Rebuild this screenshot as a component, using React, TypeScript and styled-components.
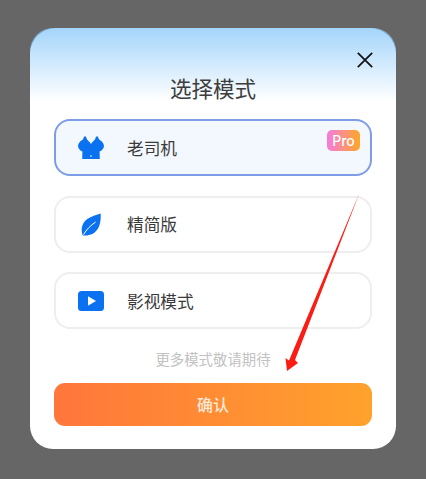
import React from 'react';
import styled, {createGlobalStyle} from "styled-components";

const GlobalStyle = createGlobalStyle`
    html, body {
        margin: 0;
        padding: 0;
        background: #666666;
    }
    body {
        font-family: "Noto Sans CJK SC", "Noto Sans", sans-serif;
    }
`

const BraIcon = () => (
    <svg width="26" height="23" viewBox="0 0 26 23">
        <path
            fill="#0a72f0"
            d="M7 0.3 C7.9 0.3 8.3 1.2 8.6 2.6 C9 4.4 11.6 5.4 13 8 C14.4 5.4 17 4.4 17.4 2.6 C17.7 1.2 18.1 0.3 19 0.3 C19.9 0.3 20.3 1.2 20.6 2.6 C20.9 4 23 4.5 24.6 6.4 C26 8 26.4 10.6 25.2 12.6 C24.2 14.2 23 15 21.6 15.6 L21.8 23 L4.2 23 L4.4 15.6 C3 15 1.8 14.2 0.8 12.6 C-0.4 10.6 0 8 1.4 6.4 C3 4.5 5.1 4 5.4 2.6 C5.7 1.2 6.1 0.3 7 0.3 Z"
        />
        <circle cx="13" cy="20" r="1" fill="#9cc8fb"/>
    </svg>
)

const LeafIcon = () => (
    <svg width="20" height="23" viewBox="0 0 20 23">
        <path
            fill="#0a72f0"
            d="M19.6 0.4 C20.2 8 18.6 15.4 13.6 19.4 C10.4 22 5.6 22.8 1.6 22.4 C0.2 18.2 0 12.8 3.6 8.4 C7 4.4 13.6 2.4 19.6 0.4 Z"
        />
        <path d="M2.6 21.6 C5.4 16.6 9.4 12.6 14.6 9" stroke="#ffffff" strokeWidth="1" fill="none"/>
    </svg>
)

const PlayIcon = () => (
    <svg width="26" height="20" viewBox="0 0 26 20">
        <rect x="0" y="0" width="26" height="20" rx="3.5" fill="#0a72f0"/>
        <path d="M10 5.2 L18 10 L10 14.8 Z" fill="#ffffff"/>
    </svg>
)

const CloseIcon = () => (
    <svg width="16" height="16" viewBox="0 0 16 16">
        <path d="M0.8 0.8 L15.2 15.2 M15.2 0.8 L0.8 15.2" stroke="#111111" strokeWidth="1.7" fill="none"/>
    </svg>
)

const modes = [
    {title: "老司机", icon: <BraIcon/>, active: true},
    {title: "精简版", icon: <LeafIcon/>, active: false},
    {title: "影视模式", icon: <PlayIcon/>, active: false},
]

export default function App() {
    return (
        <Page>
            <GlobalStyle/>
            <Dialog>
                <CloseButton><CloseIcon/></CloseButton>
                <Title>选择模式</Title>
                <ModeList>
                    {modes.map(mode => (
                        <ModeRow key={mode.title} $active={mode.active}>
                            <IconSlot>{mode.icon}</IconSlot>
                            <ModeName>{mode.title}</ModeName>
                            {mode.active && <ProBadge>Pro</ProBadge>}
                        </ModeRow>
                    ))}
                </ModeList>
                <Hint>更多模式敬请期待</Hint>
                <ConfirmButton>确认</ConfirmButton>
            </Dialog>
            <Arrow width="426" height="479" viewBox="0 0 426 479">
                <path
                    fill="#fb1c14"
                    d="M359.5 193 L295 360 L298 363 L287 371 L285.5 358 L289 360.5 Z"
                />
            </Arrow>
        </Page>
    )
}

const Page = styled.div`
    position: relative;
    width: 426px;
    height: 479px;
    padding-top: 28px;
    box-sizing: border-box;
    overflow: hidden;
    background: #666666;
`
const Dialog = styled.div`
    position: relative;
    isolation: isolate;
    width: 366px;
    height: 421px;
    margin-left: 30px;
    padding: 0 24px;
    box-sizing: border-box;
    display: flex;
    flex-direction: column;
    border-radius: 23px;
    background: linear-gradient(180deg, #7da7c6 0, #7da7c6 30px, #ffffff 30px);

    &::before {
        content: '';
        position: absolute;
        z-index: -1;
        top: 0;
        left: 0;
        right: 0;
        height: 73px;
        border-radius: 26px 26px 0 0;
        background: linear-gradient(180deg, #a4d5fb 0, #ffffff 100%);
    }
`
const CloseButton = styled.div`
    position: absolute;
    top: 24px;
    right: 23px;
    width: 16px;
    height: 16px;
    line-height: 0;
`
const Title = styled.h1`
    margin: 45px 0 0;
    height: 30px;
    font-size: 21.5px;
    line-height: 30px;
    font-weight: 400;
    text-align: center;
    color: #3d3d3d;
`
const ModeList = styled.div`
    display: flex;
    flex-direction: column;
    gap: 19.5px;
    margin-top: 16px;
`
const ModeRow = styled.div<{$active: boolean}>`
    position: relative;
    height: 57px;
    box-sizing: border-box;
    display: flex;
    align-items: center;
    padding-left: 21px;
    border-radius: 16px;
    border: 2px solid ${props => props.$active ? "#7e9de8" : "#eeeeee"};
    background: ${props => props.$active ? "#f3f8fe" : "#ffffff"};
`
const IconSlot = styled.div`
    width: 28px;
    height: 28px;
    display: flex;
    align-items: center;
    justify-content: center;
    line-height: 0;
`
const ModeName = styled.span`
    margin-left: 22px;
    font-size: 16.7px;
    line-height: 24px;
    color: #3a3a3a;
`
const ProBadge = styled.span`
    position: absolute;
    top: 9px;
    right: 10px;
    width: 33px;
    height: 21px;
    border-radius: 5px;
    background: linear-gradient(90deg, #f47be0 0, #ffa726 100%);
    font-family: "Inter", "Noto Sans", sans-serif;
    font-size: 14px;
    font-weight: 500;
    line-height: 21px;
    text-align: center;
    color: #ffffff;
`
const Hint = styled.div`
    margin-top: 19px;
    height: 22px;
    font-size: 14.4px;
    line-height: 22px;
    text-align: center;
    color: #c2c2c2;
`
const ConfirmButton = styled.div`
    margin-top: 13px;
    height: 43px;
    border-radius: 11px;
    background: linear-gradient(90deg, #ff763b 0, #ffa22c 100%);
    font-size: 16px;
    font-weight: 500;
    line-height: 43px;
    text-align: center;
    color: #ffe9d8;
`
const Arrow = styled.svg`
    position: absolute;
    top: 0;
    left: 0;
    pointer-events: none;
`
